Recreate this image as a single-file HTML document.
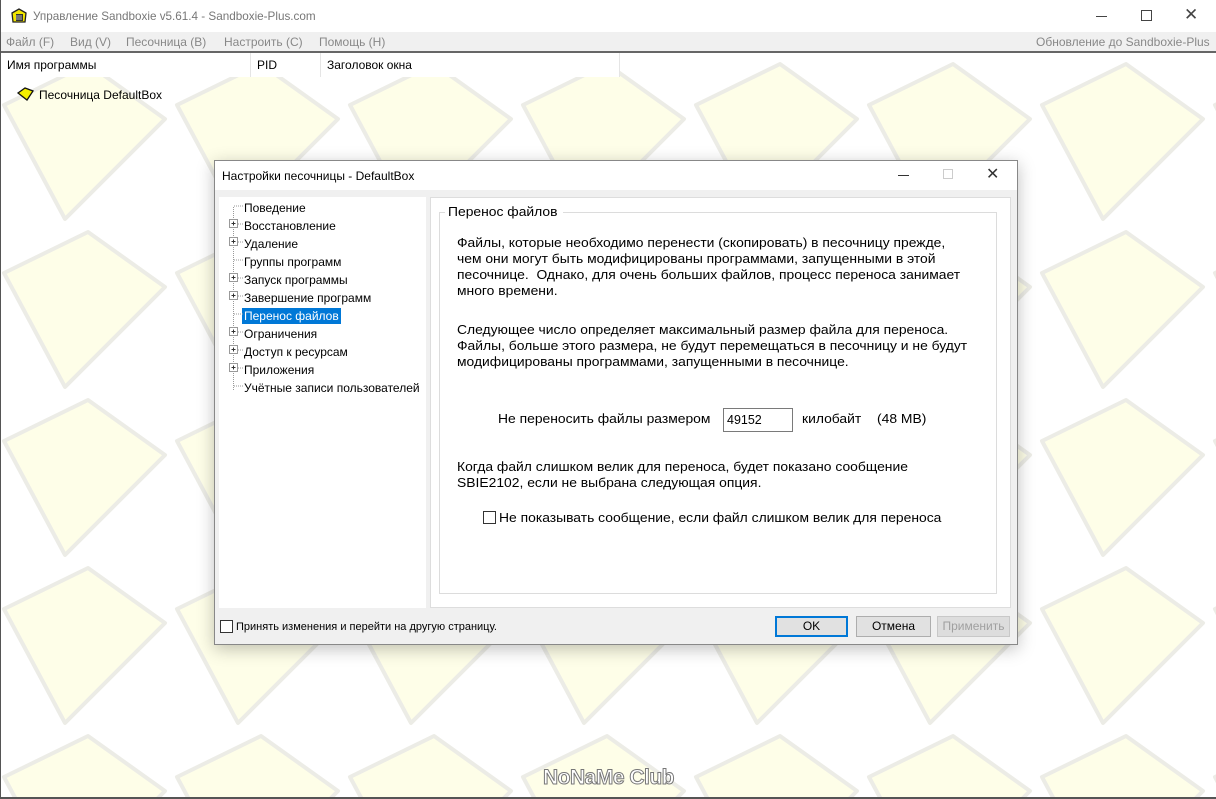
<!DOCTYPE html><html><head><meta charset="utf-8"><style>
*{margin:0;padding:0;box-sizing:border-box}
body{width:1216px;height:799px;position:relative;overflow:hidden;background:#fff;font-family:"Liberation Sans",sans-serif;font-size:12px;color:#000}
.a{position:absolute;white-space:nowrap}
.w{transform:scaleX(1.11);transform-origin:0 0;font-size:12.5px}
</style></head><body>
<svg class="a" style="left:0;top:0" width="1216" height="799">
<defs><pattern id="p" x="0" y="61" width="173" height="168" patternUnits="userSpaceOnUse">
<polygon points="88,3 165,58 65,158 4,44" fill="#fefee8" stroke="#ececE6" stroke-width="4" stroke-linejoin="round"/>
</pattern></defs>
<rect x="0" y="0" width="1216" height="799" fill="url(#p)"/>
</svg>
<div class="a" style="left:0;top:0;width:1216px;height:32px;background:#fff"></div>
<svg class="a" style="left:10px;top:8px" width="18" height="16"><path d="M2 5 L9 1 L16 5 L15 14 L3 14 Z" fill="#f2e600" stroke="#222" stroke-width="1.3"/><rect x="6" y="6" width="7" height="7" fill="#333"/><path d="M7 7v5M9 7v5M11 7v5" stroke="#ddd" stroke-width=".8"/></svg>
<div class="a" style="left:33px;top:10px;font-size:11.7px;color:#777">Управление Sandboxie v5.61.4 - Sandboxie-Plus.com</div>
<div class="a" style="left:1096px;top:16px;width:11px;height:1px;background:#444"></div>
<div class="a" style="left:1141px;top:10px;width:11px;height:11px;border:1px solid #444"></div>
<div class="a" style="left:1184px;top:5px;font-size:17px;color:#444">✕</div>
<div class="a" style="left:0;top:32px;width:1216px;height:20px;background:#f0f0f0"></div>
<div class="a" style="left:6px;top:35px;color:#888">Файл (F)</div>
<div class="a" style="left:70px;top:35px;color:#888">Вид (V)</div>
<div class="a" style="left:126px;top:35px;color:#888">Песочница (B)</div>
<div class="a" style="left:224px;top:35px;color:#888">Настроить (C)</div>
<div class="a" style="left:319px;top:35px;color:#888">Помощь (H)</div>
<div class="a" style="left:1036px;top:35px;color:#888">Обновление до Sandboxie-Plus</div>
<div class="a" style="left:0;top:51px;width:1216px;height:2px;background:#666"></div>
<div class="a" style="left:0;top:53px;width:620px;height:24px;background:#fff;border-right:1px solid #e5e5e5"></div>
<div class="a" style="left:250px;top:53px;width:1px;height:24px;background:#e5e5e5"></div>
<div class="a" style="left:320px;top:53px;width:1px;height:24px;background:#e5e5e5"></div>
<div class="a" style="left:7px;top:58px">Имя программы</div>
<div class="a" style="left:257px;top:58px">PID</div>
<div class="a" style="left:327px;top:58px">Заголовок окна</div>
<svg class="a" style="left:17px;top:87px" width="18" height="15"><path d="M1 6 L8 1 L16 4 L10 13 Z" fill="#f5ef00" stroke="#111" stroke-width="1.3"/></svg>
<div class="a" style="left:39px;top:88px">Песочница DefaultBox</div>
<div class="a" style="left:0;top:0;width:1px;height:799px;background:#555"></div>
<div class="a" style="left:0;top:797px;width:1216px;height:2px;background:#555"></div>
<div class="a" style="left:543px;top:766px;font-size:21px;font-weight:bold;color:#fff;-webkit-text-stroke:1px #777;letter-spacing:-0.5px">NoNaMe Club</div>
<div class="a" style="left:214px;top:160px;width:804px;height:485px;background:#f0f0f0;border:1px solid #888;box-shadow:0 4px 16px rgba(0,0,0,.25)"></div>
<div class="a" style="left:215px;top:161px;width:802px;height:29px;background:#fff"></div>
<div class="a" style="left:222px;top:169px">Настройки песочницы - DefaultBox</div>
<div class="a" style="left:898px;top:175px;width:11px;height:1px;background:#333"></div>
<div class="a" style="left:943px;top:169px;width:10px;height:10px;border:1px solid #ccc"></div>
<div class="a" style="left:986px;top:164px;font-size:16px;color:#333">✕</div>
<div class="a" style="left:219px;top:197px;width:207px;height:411px;background:#fff"></div>
<div class="a" style="left:233px;top:207px;width:0;height:183px;border-left:1px dotted #999"></div>
<div class="a" style="left:244px;top:199px;line-height:18px">Поведение<br>Восстановление<br>Удаление<br>Группы программ<br>Запуск программы<br>Завершение программ<br><span style="background:#0078d7;color:#fff;padding:1px 2px;margin-left:-2px">Перенос файлов</span><br>Ограничения<br>Доступ к ресурсам<br>Приложения<br>Учётные записи пользователей</div>
<svg class="a" style="left:227px;top:199px" width="18" height="200">
<g stroke="#999" stroke-dasharray="1 1"><path d="M7 7h10M7 25h10M7 43h10M7 61h10M7 79h10M7 97h10M7 115h10M7 133h10M7 151h10M7 169h10M7 187h10"/></g>
<g fill="#fff" stroke="#999"><rect x="2.5" y="20.5" width="8" height="8"/><rect x="2.5" y="38.5" width="8" height="8"/><rect x="2.5" y="74.5" width="8" height="8"/><rect x="2.5" y="92.5" width="8" height="8"/><rect x="2.5" y="128.5" width="8" height="8"/><rect x="2.5" y="146.5" width="8" height="8"/><rect x="2.5" y="164.5" width="8" height="8"/></g>
<g stroke="#333"><path d="M4.5 24.5h4M6.5 22.5v4M4.5 42.5h4M6.5 40.5v4M4.5 78.5h4M6.5 76.5v4M4.5 96.5h4M6.5 94.5v4M4.5 132.5h4M6.5 130.5v4M4.5 150.5h4M6.5 148.5v4M4.5 168.5h4M6.5 166.5v4"/></g>
</svg>
<div class="a" style="left:430px;top:197px;width:581px;height:411px;background:#fff;border:1px solid #ddd"></div>
<div class="a" style="left:439px;top:212px;width:558px;height:382px;border:1px solid #dcdcdc"></div>
<div class="a" style="left:445px;top:205px;background:#fff;width:118px;height:14px"></div>
<div class="a w" style="left:448px;top:205px">Перенос файлов</div>
<div class="a w" style="left:457px;top:235px;line-height:16px">Файлы, которые необходимо перенести (скопировать) в песочницу прежде,<br>чем они могут быть модифицированы программами, запущенными в этой<br>песочнице.&nbsp; Однако, для очень больших файлов, процесс переноса занимает<br>много времени.</div>
<div class="a w" style="left:457px;top:322px;line-height:16px">Следующее число определяет максимальный размер файла для переноса.<br>Файлы, больше этого размера, не будут перемещаться в песочницу и не будут<br>модифицированы программами, запущенными в песочнице.</div>
<div class="a w" style="left:498px;top:412px">Не переносить файлы размером</div>
<div class="a" style="left:723px;top:408px;width:70px;height:24px;border:1px solid #7a7a7a;padding:4px 0 0 3px;font-size:12.5px">49152</div>
<div class="a w" style="left:802px;top:412px">килобайт</div>
<div class="a w" style="left:877px;top:412px">(48 MB)</div>
<div class="a w" style="left:457px;top:459px;line-height:16px">Когда файл слишком велик для переноса, будет показано сообщение<br>SBIE2102, если не выбрана следующая опция.</div>
<div class="a" style="left:483px;top:511px;width:13px;height:13px;border:1px solid #333;background:#fff"></div>
<div class="a w" style="left:499px;top:511px">Не показывать сообщение, если файл слишком велик для переноса</div>
<div class="a" style="left:220px;top:620px;width:13px;height:13px;border:1px solid #333;background:#fff"></div>
<div class="a" style="left:236px;top:621px;font-size:11px">Принять изменения и перейти на другую страницу.</div>
<div class="a" style="left:775px;top:616px;width:73px;height:21px;border:2px solid #0078d7;background:#e1e1e1;text-align:center;line-height:17px">OK</div>
<div class="a" style="left:856px;top:616px;width:75px;height:21px;border:1px solid #adadad;background:#e1e1e1;text-align:center;line-height:19px">Отмена</div>
<div class="a" style="left:937px;top:616px;width:73px;height:21px;border:1px solid #c8c8c8;background:#ddd;color:#a0a0a0;text-align:center;line-height:19px">Применить</div>
</body></html>
